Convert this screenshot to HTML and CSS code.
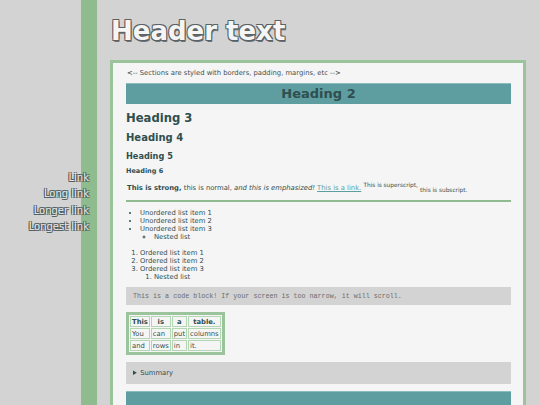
FILE: index.html
```html
<!DOCTYPE html>
<html lang="en">
<head>
<meta charset="utf-8">
<title>Styled page</title>
<link rel="stylesheet" href="styles.css">
</head>
<body>
<div class="page">
  <nav class="side">
    <div class="links">
      <a href="#">Link</a>
      <a href="#">Long link</a>
      <a href="#">Longer link</a>
      <a href="#">Longest link</a>
    </div>
  </nav>
  <main class="main">
    <h1 class="title">Header text</h1>
    <section class="card">
      <p class="note">&lt;-- Sections are styled with borders, padding, margins, etc --&gt;</p>
      <h2 class="h2">Heading 2</h2>
      <h3 class="h3">Heading 3</h3>
      <h4 class="h4">Heading 4</h4>
      <h5 class="h5">Heading 5</h5>
      <h6 class="h6">Heading 6</h6>
      <p class="text"><strong>This is strong,</strong> this is normal, <em>and this is emphasized!</em> <a href="#" class="link">This is a link.</a> <sup class="sup">This is superscript,</sup> <sub class="sub">this is subscript.</sub></p>
      <hr class="rule">
      <ul class="ul">
        <li>Unordered list item 1</li>
        <li>Unordered list item 2</li>
        <li>Unordered list item 3
          <ul class="ul-nested"><li>Nested list</li></ul>
        </li>
      </ul>
      <ol class="ol">
        <li>Ordered list item 1</li>
        <li>Ordered list item 2</li>
        <li>Ordered list item 3
          <ol class="ol-nested"><li>Nested list</li></ol>
        </li>
      </ol>
      <pre class="code">This is a code block! If your screen is too narrow, it will scroll.</pre>
      <table class="table">
        <tr><th>This</th><th>is</th><th>a</th><th>table.</th></tr>
        <tr><td>You</td><td>can</td><td>put</td><td>columns</td></tr>
        <tr><td>and</td><td>rows</td><td>in</td><td>it.</td></tr>
      </table>
      <details class="details"><summary>Summary</summary><p>Details content.</p></details>
      <div class="bar"></div>
    </section>
  </main>
</div>
</body>
</html>
```

FILE: styles.css
```css
html, body {
  margin: 0;
  padding: 0;
}
body {
  background: #d3d3d3;
  font-family: "DejaVu Sans", Verdana, sans-serif;
  color: #2f4f4f;
  overflow: hidden;
}
.page {
  display: flex;
  min-height: 100vh;
}
.side {
  flex: none;
  width: 97px;
  height: 100vh;
  box-sizing: border-box;
  padding-right: 8px;
  background: linear-gradient(to right, transparent 81px, #8fbc8f 81px, #8fbc8f 97px);
  display: flex;
  flex-direction: column;
  justify-content: center;
  text-align: right;
}
.links a {
  display: block;
  font-size: 10px;
  line-height: 16.4px;
  color: #e6e6e6;
  text-decoration: none;
  text-shadow: -1px -1px 0 #4f5f62, 1px -1px 0 #4f5f62, -1px 1px 0 #4f5f62, 1px 1px 0 #4f5f62;
}
.main {
  flex: 1;
  min-width: 0;
  padding: 0 14px 0 13px;
}
.title {
  margin: 16px 0 14px 1px;
  font-size: 26px;
  font-weight: bold;
  line-height: normal;
  color: #f5f5f5;
  text-shadow: -1px -1px 0 #5a6266, 1px -1px 0 #5a6266, -1px 1px 0 #5a6266, 1px 1px 0 #5a6266, 1px 2px 0 #6a7276;
}
.card {
  border: 3px solid #9cc49c;
  background: #f5f5f5;
  padding: 6px 12px 20px 13px;
}
.note {
  margin: 0 0 0 1px;
  font-size: 6.8px;
  line-height: 8px;
  color: #3f4f4f;
}
.h2 {
  margin: 6px 0 0;
  padding: 2px 0 3px;
  border-top: 1px solid #8cbcbd;
  background: #5f9ea0;
  color: #2f4f4f;
  font-size: 13px;
  line-height: 15px;
  text-align: center;
}
.h3 {
  margin: 7px 0 0;
  font-size: 11.6px;
  line-height: 14px;
}
.h4 {
  margin: 7px 0 0;
  font-size: 10px;
  line-height: 12px;
}
.h5 {
  margin: 7px 0 0;
  font-size: 8.2px;
  line-height: 10px;
}
.h6 {
  margin: 6px 0 0;
  font-size: 6.5px;
  line-height: 8px;
}
.text {
  margin: 8px 0 0 1px;
  font-size: 6.8px;
  line-height: 10px;
}
.link {
  color: #5f9ea0;
}
.sup, .sub {
  font-size: 5.8px;
  line-height: 0;
}
.rule {
  margin: 7px 0 0;
  border: 0;
  height: 2px;
  background: #8fbc8f;
}
.ul, .ol {
  margin: 7px 0 0;
  padding-left: 14px;
  font-size: 6.8px;
  line-height: 8px;
}
.ol {
  margin-top: 8px;
}
.ul-nested, .ol-nested {
  margin: 0;
  padding-left: 14px;
}
.code {
  margin: 6px 0 0;
  padding: 5px 7px;
  background: #d3d3d3;
  color: #6d6d6d;
  font-family: "Liberation Mono", "Courier New", monospace;
  font-size: 6.7px;
  line-height: 8px;
  overflow: auto;
}
.table {
  margin-top: 7px;
  border: 3px solid #9cc49c;
  border-spacing: 1px;
  font-size: 6.8px;
  line-height: 8px;
}
.table th, .table td {
  border: 1px solid #b3d6b3;
  padding: 1px 1px 0;
  text-align: left;
}
.table th {
  text-align: center;
}
.details {
  margin-top: 7px;
  padding: 7px 7px;
  background: #d3d3d3;
  font-size: 6.8px;
  line-height: 8px;
}
.details p {
  margin: 4px 0 0;
}
.bar {
  margin-top: 7px;
  height: 40px;
  border-top: 1px solid #8cbcbd;
  background: #5f9ea0;
}
```
